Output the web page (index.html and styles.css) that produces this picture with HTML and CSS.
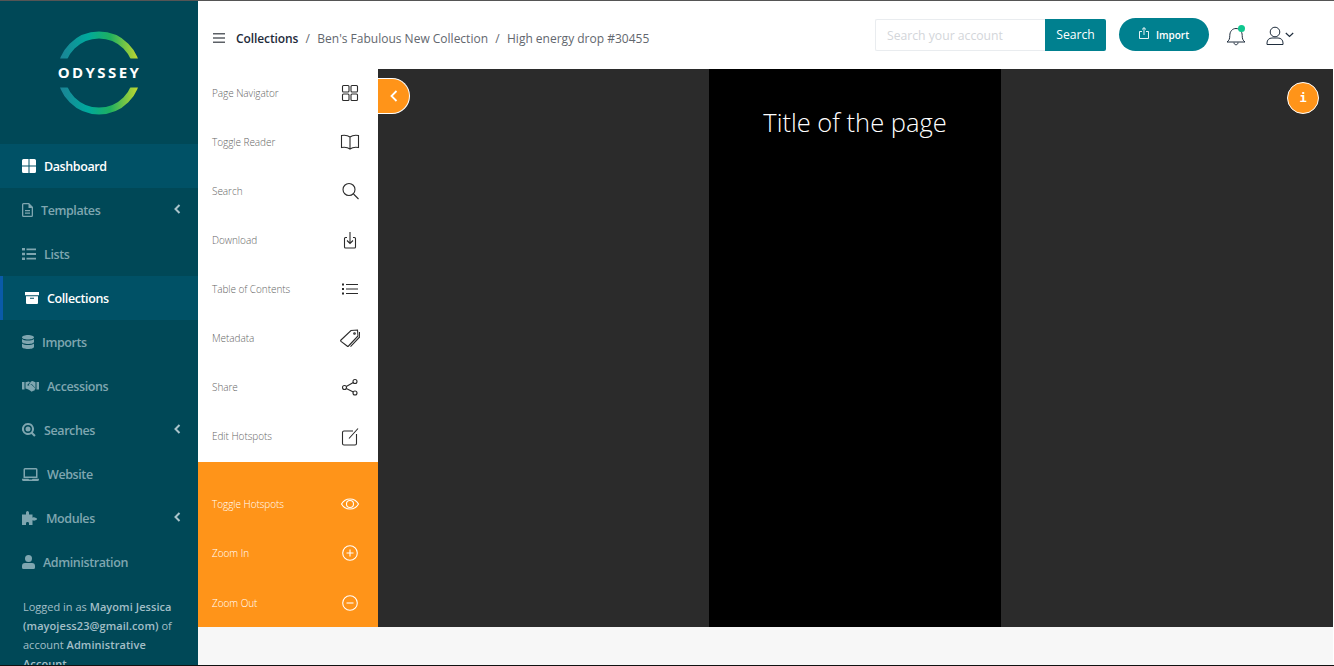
FILE: index.html
```html
<!DOCTYPE html>
<html lang="en">
<head>
<meta charset="utf-8">
<title>Odyssey</title>
<link rel="stylesheet" href="styles.css">
</head>
<body>
<div class="app">
  <aside class="sidebar">
    <div class="logo">
      <svg width="90" height="90" viewBox="0 0 90 90">
        <defs>
          <linearGradient id="lg" x1="0" y1="0" x2="1" y2="0">
            <stop offset="0" stop-color="#1b8496"/>
            <stop offset=".35" stop-color="#00a99d"/>
            <stop offset=".65" stop-color="#1fb05f"/>
            <stop offset="1" stop-color="#bcd631"/>
          </linearGradient>
          <clipPath id="cut"><path d="M0 0h90v30.500H0zM0 59.500h90V90H0z"/></clipPath>
        </defs>
        <circle class="ring" cx="45" cy="45" r="38" stroke="url(#lg)" clip-path="url(#cut)"/>
        <text x="45.500" y="50" class="logotext">ODYSSEY</text>
      </svg>
    </div>
    <nav class="nav">
      <a class="item active">
        <svg class="ic" width="14" height="14" viewBox="0 0 14 14"><path d="M0 1.5A1.5 1.5 0 0 1 1.5 0h5v6.5H0zM7.500 0h5A1.500 1.500 0 0 1 14 1.500v5H7.500zM0 7.500h6.500V14h-5A1.500 1.500 0 0 1 0 12.500zM7.500 7.500H14v5a1.500 1.500 0 0 1-1.500 1.500h-5z"/></svg>
        <span>Dashboard</span>
      </a>
      <a class="item">
        <svg class="ic" width="11" height="14" viewBox="0 0 11 14"><path fill-rule="evenodd" d="M1.500 0H7l4 4v8.500A1.500 1.500 0 0 1 9.500 14h-8A1.500 1.500 0 0 1 0 12.500v-11A1.500 1.500 0 0 1 1.500 0zm0 1.300a.2.2 0 0 0-.2.2v11c0 .1.100.2.200.2h8a.2.2 0 0 0 .2-.2V5H6.500V1.300zM3 7h5v1.200H3zm0 2.500h5v1.200H3z"/></svg>
        <span>Templates</span>
        <svg class="chev" width="7" height="10" viewBox="0 0 7 10"><path d="M5.500 1 1.500 5l4 4" /></svg>
      </a>
      <a class="item">
        <svg class="ic" width="14" height="12" viewBox="0 0 14 12"><path d="M0 0h3v2.600H0zM4.500.4H14v1.800H4.500zM0 4.700h3v2.600H0zM4.500 5.100H14v1.800H4.500zM0 9.400h3V12H0zM4.500 9.800H14v1.800H4.500z"/></svg>
        <span>Lists</span>
      </a>
      <a class="item active marked">
        <svg class="ic" width="14" height="12" viewBox="0 0 14 12"><path fill-rule="evenodd" d="M0 0h14v3.300H0zM1 4.300h12V11a1 1 0 0 1-1 1H2a1 1 0 0 1-1-1zm4 1.500v1h4v-1z"/></svg>
        <span>Collections</span>
      </a>
      <a class="item">
        <svg class="ic" width="12" height="14" viewBox="0 0 12 14"><path d="M6 0c3.300 0 6 1 6 2.300S9.300 4.600 6 4.600 0 3.600 0 2.300 2.700 0 6 0zM0 4.100c1.300 1 3.600 1.500 6 1.500s4.700-.5 6-1.500v2.600C12 8 9.300 9 6 9S0 8 0 6.700zM0 8.500C1.300 9.500 3.600 10 6 10s4.700-.5 6-1.500v3.200C12 13 9.300 14 6 14s-6-1-6-2.300z"/></svg>
        <span>Imports</span>
      </a>
      <a class="item">
        <svg class="ic" width="17" height="12" viewBox="0 0 17 12"><path d="M0 2h2.500v7.500H0zM14.500 2H17v7.500h-2.500zM3.500 2.300 6.800 1.500 8 2.200 5.600 4.500c-.4.500 0 1.300.8 1.300L9 4.200l4.500 4.300c.3.500-.4 1.100-.9.800l.2.600c-.1.600-.7.800-1.100.6-.1.600-.7.800-1.200.6-.2.500-.8.700-1.200.4L8 10.600C7 9.800 6 9 3.500 8.500z"/><path d="M9 1.400 10.400 1l3.100 1.300v6l-3.800-4.300-2.600 1.500c-.5.100-.8-.2-.5-.6z"/></svg>
        <span>Accessions</span>
      </a>
      <a class="item">
        <svg class="ic" width="14" height="14" viewBox="0 0 14 14"><path fill-rule="evenodd" d="M6 0a6 6 0 0 1 4.900 9.400l2.800 2.800-1.500 1.500-2.800-2.800A6 6 0 1 1 6 0zm0 2a4 4 0 1 0 0 8 4 4 0 0 0 0-8zm0 1.500a2.500 2.500 0 1 1 0 5 2.500 2.500 0 0 1 0-5z"/></svg>
        <span>Searches</span>
        <svg class="chev" width="7" height="10" viewBox="0 0 7 10"><path d="M5.500 1 1.500 5l4 4" /></svg>
      </a>
      <a class="item">
        <svg class="ic" width="17" height="13" viewBox="0 0 17 13"><path fill-rule="evenodd" d="M3 0h11a1.500 1.500 0 0 1 1.500 1.500V10h-14V1.500A1.500 1.500 0 0 1 3 0zm0 1.500V8.500h11V1.500zM0 10.800h6.500l.5.700h3l.5-.7H17v.7a1.500 1.500 0 0 1-1.500 1.500h-14A1.500 1.500 0 0 1 0 11.500z"/></svg>
        <span>Website</span>
      </a>
      <a class="item">
        <svg class="ic" width="16" height="14" viewBox="0 0 16 14"><path d="M4 3.500V1.800C4 .8 4.800 0 5.500 0S7 .8 7 1.800v1.700h3.500v3.200c1.500-.8 2.200-.4 3 0 .8.300 1.500.5 1.500 1.300s-.7 1-1.500 1.300c-.8.400-1.500.8-3 0V14H7v-1.500C7 11.500 6.500 11 5.500 11S4 11.500 4 12.500V14H0V3.500z"/></svg>
        <span>Modules</span>
        <svg class="chev" width="7" height="10" viewBox="0 0 7 10"><path d="M5.500 1 1.500 5l4 4" /></svg>
      </a>
      <a class="item">
        <svg class="ic" width="13" height="14" viewBox="0 0 13 14"><circle cx="6.500" cy="3.500" r="3.500"/><path d="M3 8h7a3 3 0 0 1 3 3v1.500a1.500 1.500 0 0 1-1.500 1.500h-10A1.500 1.500 0 0 1 0 12.500V11a3 3 0 0 1 3-3z"/></svg>
        <span>Administration</span>
      </a>
    </nav>
    <p class="logged">Logged in as <b>Mayomi Jessica (mayojess23@gmail.com)</b> of account <b>Administrative Account</b></p>
  </aside>

  <div class="content">
    <header class="topbar">
      <svg class="burger" width="12" height="10" viewBox="0 0 12 10"><path d="M0 0h12v1.600H0zM0 4.200h12v1.600H0zM0 8.400h12V10H0z"/></svg>
      <div class="crumbs">
        <span class="crumb-first">Collections</span><span class="sep">/</span><span>Ben's Fabulous New Collection</span><span class="sep">/</span><span>High energy drop #30455</span>
      </div>
      <div class="searchbox">
        <input class="searchinput" type="text" placeholder="Search your account">
        <button class="searchbtn">Search</button>
      </div>
      <button class="importbtn">
        <svg width="10" height="12" viewBox="0 0 10 12" fill="none" stroke="#fff" stroke-width=".9"><path d="M3 4.500H.5v7h9v-7H7M5 8V.8M3 2.500 5 .6l2 1.900"/></svg>
        <span>Import</span>
      </button>
      <div class="bell">
        <svg width="20" height="21" viewBox="0 0 20 21" fill="none" stroke="#1f2d3d" stroke-width="1"><path d="M1 17c2-1.500 2.800-3 2.800-6.500 0-4 2.500-7 6.200-7s6.200 3 6.200 7c0 3.500.8 5 2.800 6.500zM8 17.500c0 3 4 3 4 0"/></svg>
        <i class="dot"></i>
      </div>
      <div class="user">
        <svg width="18" height="19" viewBox="0 0 18 19" fill="none" stroke="#1f2d3d" stroke-width="1"><circle cx="9" cy="6" r="4.800"/><path d="M1 18.500v-1.500c0-3 2-5 5-5h6c3 0 5 2 5 5v1.500z"/></svg>
        <svg width="9" height="6" viewBox="0 0 9 6" fill="none" stroke="#1f2d3d" stroke-width="1.200"><path d="M.8 1 4.500 4.500 8.200 1"/></svg>
      </div>
    </header>

    <div class="workspace">
      <div class="panel">
        <ul class="tools">
          <li class="tool"><span>Page Navigator</span>
            <svg class="ti" width="20" height="20" viewBox="0 0 20 20"><rect x="2.500" y="2.500" width="6.500" height="6.500" rx="1"/><rect x="11" y="2.500" width="6.500" height="6.500" rx="1"/><rect x="2.500" y="11" width="6.500" height="6.500" rx="1"/><rect x="11" y="11" width="6.500" height="6.500" rx="1"/></svg></li>
          <li class="tool"><span>Toggle Reader</span>
            <svg class="ti" width="20" height="20" viewBox="0 0 20 20"><path d="M10 5C8 3.500 4.500 3 1.500 3.500v12c3-.5 6.500 0 8.500 1.500 2-1.500 5.500-2 8.500-1.500v-12C15.500 3 12 3.500 10 5zM10 5v12"/></svg></li>
          <li class="tool"><span>Search</span>
            <svg class="ti" width="20" height="20" viewBox="0 0 20 20"><circle cx="9" cy="8.500" r="6"/><path d="m13.500 13 5 5"/></svg></li>
          <li class="tool"><span>Download</span>
            <svg class="ti" width="20" height="20" viewBox="0 0 20 20"><path d="M7 7.500H5.500a1 1 0 0 0-1 1V17a1 1 0 0 0 1 1h9a1 1 0 0 0 1-1V8.500a1 1 0 0 0-1-1H13M10 2v11M7 10.500l3 3 3-3"/></svg></li>
          <li class="tool"><span>Table of Contents</span>
            <svg class="ti" width="20" height="20" viewBox="0 0 20 20"><path d="M6 5.500h12M6 10h12M6 14.500h12"/><path class="bold" d="M2 5.500h2M2 10h2M2 14.500h2"/></svg></li>
          <li class="tool"><span>Metadata</span>
            <svg class="ti" width="20" height="20" viewBox="0 0 20 20"><path d="M1 12 11 2.500l6.500-.5.500 6-9.500 10a1 1 0 0 1-1.400 0L1 13.400a1 1 0 0 1 0-1.400z"/><path d="m19.500 4 .2 5-9.200 9.700"/><circle cx="14.500" cy="5.500" r=".8"/></svg></li>
          <li class="tool"><span>Share</span>
            <svg class="ti" width="20" height="20" viewBox="0 0 20 20"><circle cx="4.500" cy="10.500" r="2"/><circle cx="15" cy="4.500" r="2"/><circle cx="15" cy="16" r="2"/><path d="m6.300 9.500 7-4M6.300 11.500l7 3.500"/></svg></li>
          <li class="tool"><span>Edit Hotspots</span>
            <svg class="ti" width="20" height="20" viewBox="0 0 20 20"><path d="M13 5H4a1.500 1.500 0 0 0-1.500 1.500v11A1.500 1.500 0 0 0 4 19h11a1.500 1.500 0 0 0 1.500-1.500V8M9 12.500 18 2.500"/></svg></li>
        </ul>
        <ul class="tools tools-orange">
          <li class="tool"><span>Toggle Hotspots</span>
            <svg class="ti" width="20" height="20" viewBox="0 0 20 20"><path d="M1.500 10C3.500 6.500 6.500 5 10 5s6.500 1.500 8.500 5c-2 3.500-5 5-8.500 5s-6.500-1.500-8.500-5z"/><circle cx="10" cy="10" r="3.500"/></svg></li>
          <li class="tool"><span>Zoom In</span>
            <svg class="ti" width="20" height="20" viewBox="0 0 20 20"><circle cx="10" cy="10" r="7.300"/><path d="M10 6.500v7M6.500 10h7"/></svg></li>
          <li class="tool"><span>Zoom Out</span>
            <svg class="ti" width="20" height="20" viewBox="0 0 20 20"><circle cx="10" cy="10" r="7.300"/><path d="M6.500 10h7"/></svg></li>
        </ul>
      </div>
      <main class="viewer">
        <button class="collapse"><svg width="8" height="12" viewBox="0 0 8 12" fill="none" stroke="#fff" stroke-width="1.800"><path d="M6.500 1 1.500 6l5 5"/></svg></button>
        <section class="page"><h1 class="pagetitle">Title of the page</h1></section>
        <button class="info">i</button>
      </main>
    </div>
    <footer class="foot"></footer>
  </div>
</div>
</body>
</html>
```

FILE: styles.css
```css
* { box-sizing: border-box; }
html, body { margin: 0; padding: 0; height: 100%; overflow: hidden; background: #fff; }
body { font-family: "Open Sans", "Liberation Sans", sans-serif; }
.app {
  display: flex;
  height: 666px;
  border-top: 1px solid #555;
  border-bottom: 1px solid #111;
  overflow: hidden;
}
.sidebar {
  width: 198px;
  flex: none;
  background: #004857;
  overflow: hidden;
}
.logo {
  height: 143px;
  display: flex;
  justify-content: center;
  padding-top: 26.500px;
}
.ring { fill: none; stroke-width: 7; }
.logotext {
  font: 700 15px "Open Sans", sans-serif;
  letter-spacing: 2.400px;
  fill: #fff;
  text-anchor: middle;
}
.nav { display: flex; flex-direction: column; }
.item {
  height: 44px;
  display: flex;
  align-items: center;
  gap: 8px;
  padding: 0 17px 0 22px;
  color: #7fa6b0;
  font-size: 12.500px;
  font-weight: 600;
  letter-spacing: -.4px;
}
.item .ic { fill: #7fa6b0; flex: none; }
.item.active { background: #005166; color: #fff; }
.item.active .ic { fill: #fff; }
.item.marked { border-left: 3px solid #0a5aa8; }
.chev { margin-left: auto; margin-top: -2px; fill: none; stroke: #a9c4cb; stroke-width: 2; }
.logged {
  margin: 13px 0 0;
  padding: 0 23px;
  color: #a3bfc7;
  font-size: 11px;
  line-height: 19px;
  font-weight: 400;
}
.logged b { font-weight: 600; letter-spacing: .08px; }
.content {
  flex: 1;
  min-width: 0;
  display: flex;
  flex-direction: column;
  border-right: 1px solid #fff;
}
.topbar {
  height: 68px;
  flex: none;
  display: flex;
  align-items: center;
  padding: 0 39px 0 15px;
  background: #fff;
}
.burger { fill: #5c6066; margin-top: 6px; }
.crumbs {
  margin-left: 11px;
  flex: 1;
  margin-top: 6px;
  font-size: 12px;
  color: #62676e;
  white-space: nowrap;
}
.crumb-first { color: #1d2a3a; font-weight: 600; letter-spacing: -.1px; }
.sep { margin: 0 7.300px; }
.searchbox { display: flex; height: 32px; margin-top: -1px; }
.searchinput {
  width: 170px;
  border: 1px solid #e9ecef;
  border-right: 0;
  border-radius: 2px 0 0 2px;
  padding: 2px 11px 0;
  font: 400 12.200px "Open Sans", sans-serif;
  outline: 0;
}
.searchinput::placeholder { color: #d3d6da; }
.searchbtn {
  width: 61px;
  border: 0;
  border-radius: 0 2px 2px 0;
  background: #00808f;
  color: #fff;
  font: 400 12.200px "Open Sans", sans-serif;
  padding: 0 0 1px;
}
.importbtn {
  width: 90px;
  height: 33px;
  margin-left: 13px;
  margin-top: -1px;
  border: 0;
  border-radius: 17px;
  background: #00808f;
  color: #fff;
  font: 600 10px "Open Sans", sans-serif;
  display: flex;
  align-items: center;
  justify-content: center;
  gap: 7px;
  padding: 0;
}
.importbtn svg { margin-top: -4px; }
.bell { position: relative; margin-left: 17px; width: 20px; height: 21px; }
.bell svg { display: block; }
.dot {
  position: absolute;
  top: 0;
  right: 1px;
  width: 7px;
  height: 7px;
  border-radius: 50%;
  background: #0fc78f;
}
.user { margin-left: 20px; display: flex; align-items: center; gap: 1px; width: 28px; }
.workspace { flex: none; height: 558px; display: flex; }
.panel { width: 180px; flex: none; display: flex; flex-direction: column; }
.tools { list-style: none; margin: 0; padding: 0 0 1.800px; background: #fff; color: #666; }
.tools-orange { flex: 1; padding: 17px 0 0; background: #ff9419; color: #fff; }
.tool {
  height: 48.900px;
  display: flex;
  align-items: center;
  justify-content: space-between;
  padding: 0 18px 0 14px;
  font-size: 10px;
  font-weight: 300;
  letter-spacing: -.05px;
}
.tools-orange .tool { height: 49.500px; }
.ti { fill: none; stroke: #2b2b2b; stroke-width: 1.100; flex: none; }
.ti .bold { stroke-width: 1.800; }
.tools-orange .ti { stroke: #fff; }
.viewer {
  position: relative;
  flex: 1;
  display: flex;
  justify-content: center;
  background: #2b2b2b;
  padding-right: 1px;
}
.page { width: 292px; background: #000; text-align: center; }
.pagetitle {
  margin: 35px 0 0;
  color: #fff;
  font-size: 25.500px;
  line-height: 36px;
  font-weight: 300;
}
.collapse {
  position: absolute;
  left: 0;
  top: 9px;
  width: 32px;
  height: 36px;
  padding: 0;
  background: #ff9419;
  border: 1px solid #fff;
  border-left: 0;
  border-radius: 0 18px 18px 0;
  display: flex;
  align-items: center;
  justify-content: center;
}
.info {
  position: absolute;
  right: 14px;
  top: 13px;
  width: 32px;
  height: 32px;
  padding: 0;
  border: 1px solid #fff;
  border-radius: 50%;
  background: #ff9419;
  color: #fff;
  font: 700 12px "DejaVu Sans Mono", monospace;
}
.foot { flex: 1; background: #f7f7f7; }
```
